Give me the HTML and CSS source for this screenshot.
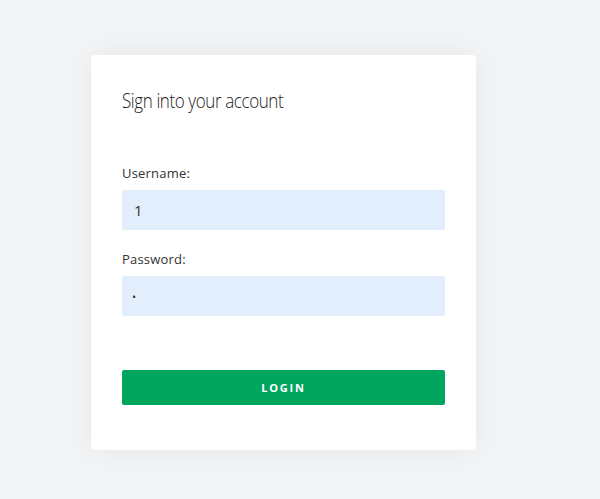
FILE: index.html
```html
<!DOCTYPE html>
<html>
<head>
<meta charset="utf-8">
<link rel="stylesheet" href="styles.css">
</head>
<body>
<div class="page">
  <form class="card">
    <h1 class="title">Sign into your account</h1>
    <div class="field">
      <label class="label">Username:</label>
      <div class="input">1</div>
    </div>
    <div class="field">
      <label class="label">Password:</label>
      <div class="input pw">•</div>
    </div>
    <button class="btn" type="button">LOGIN</button>
  </form>
</div>
</body>
</html>
```
FILE: styles.css
```css
html, body {
  margin: 0;
  padding: 0;
  background: #f3f4f6;
  height: 100%;
}
.page {
  padding: 55px 0 0 91px;
}
.card {
  box-sizing: border-box;
  width: 385px;
  height: 395px;
  background: #fff;
  border-radius: 4px;
  box-shadow: 0 0 30px rgba(0,0,0,0.06);
  padding: 31px 31px 0 31px;
  display: flex;
  flex-direction: column;
}
.title {
  margin: 0;
  font-family: "Open Sans", sans-serif;
  font-weight: 350;
  font-size: 21px;
  letter-spacing: -0.5px;
  transform: scaleX(0.81);
  transform-origin: left;
  color: #222;
  line-height: 28px;
  white-space: nowrap;
}
.title + .field {
  margin-top: 50px;
}
.field {
  display: flex;
  flex-direction: column;
}
.field + .field {
  margin-top: 20px;
}
.label {
  font-family: "Open Sans", sans-serif;
  font-size: 13px;
  letter-spacing: 0.2px;
  color: #333;
  line-height: 18px;
  margin-bottom: 8px;
}
.input {
  height: 40px;
  background: #e3eefc;
  border-radius: 2px;
  font-family: "Open Sans", sans-serif;
  font-size: 15px;
  color: #333;
  line-height: 40px;
  padding-left: 12px;
}
.input.pw {
  font-size: 11px;
  line-height: 42px;
  padding-left: 10px;
}
.btn {
  margin-top: 54px;
  height: 35px;
  border: none;
  border-radius: 2px;
  background: #00a65d;
  color: #fff;
  font-family: "Open Sans", sans-serif;
  font-weight: 700;
  font-size: 11px;
  letter-spacing: 1.8px;
  padding: 0;
}
```
